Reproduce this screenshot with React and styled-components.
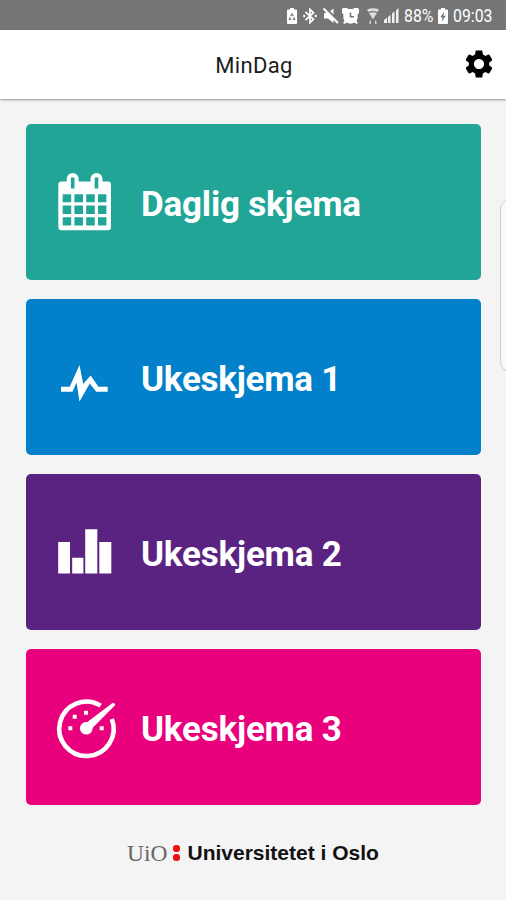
import React from 'react';
import styled, { createGlobalStyle } from 'styled-components';
import { MdSettings } from 'react-icons/md';

const forms = [
	{ title: 'Daglig skjema', color: '#20A596', icon: <CalendarIcon />, spacing: -0.2 },
	{ title: 'Ukeskjema 1', color: '#0380CA', icon: <PulseIcon />, spacing: -0.25 },
	{ title: 'Ukeskjema 2', color: '#5B2381', icon: <BarsIcon />, spacing: -0.2 },
	{ title: 'Ukeskjema 3', color: '#E8007D', icon: <GaugeIcon />, spacing: -0.2 },
];

const App = () => {
	return (
		<Screen>
			<GlobalStyle />
			<StatusBar />
			<Header>
				<HeaderTitle>MinDag</HeaderTitle>
				<SettingsButton aria-label='Innstillinger'>
					<MdSettings size={34} />
				</SettingsButton>
			</Header>
			<Main>
				{forms.map(({ title, color, icon, spacing }) => (
					<FormCard key={title} $color={color}>
						{icon}
						<CardTitle $spacing={spacing}>{title}</CardTitle>
					</FormCard>
				))}
			</Main>
			<Footer>
				<UioMark>UiO</UioMark>
				<Colon>
					<Dot />
					<Dot />
				</Colon>
				<UioName>Universitetet i Oslo</UioName>
			</Footer>
			<EdgeHandle />
		</Screen>
	)
}

export default App;

function StatusBar() {
	return (
		<Status>
			<StatusIcon width='10' height='16' viewBox='0 0 10 16' $gap={6}>
				<path fillRule='evenodd' d='M3 0h4v1.5h2a1 1 0 0 1 1 1V15a1 1 0 0 1-1 1H1a1 1 0 0 1-1-1V2.5a1 1 0 0 1 1-1h2zM5 5L3.2 7.6l1 .6L5 7l1 1.6 1-.6zM2.6 8.8L1.6 12h2.6v-1.2H3.2l.5-1.4zM7.4 8.8l-1 .6.5 1.4H5.6V12h2.8z' />
			</StatusIcon>
			<StatusIcon width='14' height='16' viewBox='0 0 14 16' $gap={6}>
				<path d='M2.500 4L10.500 11.300L7 14.700V1.300L10.500 4.700L2.500 12' fill='none' stroke='#fff' strokeWidth='1.700' />
				<circle cx='1.200' cy='8' r='1.200' />
				<circle cx='12.800' cy='8' r='1.200' />
			</StatusIcon>
			<StatusIcon width='16' height='16' viewBox='0 0 16 16' $gap={3}>
				<path d='M1 5h4l5.500-4.500v14.500L5 10.500H1z' />
				<path d='M1.500 0L16 14.500' stroke='#757575' strokeWidth='3.600' />
				<path d='M.500 .500L15 15' stroke='#fff' strokeWidth='2' />
			</StatusIcon>
			<StatusIcon width='17' height='16' viewBox='0 0 17 16' $gap={8}>
				<path d='M1 0h4l1 1h5l1-1h4l1 1v4l-1.400 1.500v4L14.500 13l1.500 2-1.500 1-2-1.400a8 8 0 0 1-8 0L2.500 16 1 15l1.500-2-1.100-2.500v-4L0 5V1z' />
				<path d='M8.500 4.500V8.800H12' fill='none' stroke='#757575' strokeWidth='1.500' />
			</StatusIcon>
			<StatusIcon width='12' height='16' viewBox='0 0 12 16' $gap={5}>
				<path d='M0 1.500Q6-1 12 1.500L10.500 4Q6 2 1.500 4zM2 5.200Q6 3.500 10 5.200L7.300 9v1.500H4.700V9z' opacity='.75' />
				<path d='M2.500 16v-2.500L4 12v4zM9.500 16v-2.500L8 12v4z' opacity='.7' />
			</StatusIcon>
			<StatusIcon width='15' height='15' viewBox='0 0 15 15' $gap={5}>
				<path d='M0 12l3-2.500V15H0zM4 9l2.500-2.200V15H4zM8 5.500l2.500-2V15H8zM12 2.500L14.500 0v15H12z' opacity='.9' />
			</StatusIcon>
			<StatusText $width={29}>88%</StatusText>
			<StatusIcon width='10' height='16' viewBox='0 0 10 16' $gap={5}>
				<path fillRule='evenodd' d='M3 0h4v1.500h2a1 1 0 0 1 1 1V15a1 1 0 0 1-1 1H1a1 1 0 0 1-1-1V2.500a1 1 0 0 1 1-1h2zM6 4L2.300 9.200h2.100L4 13.500l3.700-5.700H5.500z' />
			</StatusIcon>
			<StatusText $width={40}>09:03</StatusText>
		</Status>
	)
}

function CalendarIcon() {
	return (
		<CardIcon viewBox='0 0 60 60'>
			<path
				fillRule='evenodd'
				d='M5.300 9.500H10.700V7a6 6 0 0 1 12 0V9.500H34.500V7a6 6 0 0 1 12 0V9.500H52a3 3 0 0 1 3 3V55a3.300 3.300 0 0 1-3.300 3.300H5.600A3.300 3.300 0 0 1 2.300 55V12.500a3 3 0 0 1 3-3z
				M14.900 5.500V16.500h3.600V5.500zM38.700 5.500V16.500h3.600V5.500z
				M6.700 22.200h8.500v8h-8.500zM18.400 22.200h8.600v8h-8.600zM30.200 22.200h8.600v8h-8.600zM42 22.200h8.400v8H42z
				M6.700 33.500h8.500v8.600h-8.500zM18.400 33.500h8.600v8.600h-8.600zM30.200 33.500h8.600v8.600h-8.600zM42 33.500h8.400v8.600H42z
				M6.700 45.200h8.500v8.200h-8.500zM18.400 45.200h8.600v8.200h-8.600zM30.200 45.200h8.600v8.200h-8.600zM42 45.200h8.400v8.200H42z'
			/>
		</CardIcon>
	)
}

function PulseIcon() {
	return (
		<CardIcon viewBox='0 0 60 60'>
			<path d='M5 39.700H13.700L23.500 18L27.200 37L34.600 28.500L42.500 39.700H51.700V44.700H40.200L33.800 36.500L23.500 54.500L20.500 35.500L16.500 44.700H5z' />
		</CardIcon>
	)
}

function BarsIcon() {
	return (
		<CardIcon viewBox='0 0 60 60'>
			<path d='M2.200 20H14V51.600H2.200zM16.200 35.800H27.400V51.600H16.200zM29.200 7.200H41.300V51.600H29.200zM43.300 20H55.300V51.600H43.300z' />
		</CardIcon>
	)
}

function GaugeIcon() {
	return (
		<CardIcon viewBox='0 0 60 60'>
			<path d='M44.600 8.600A27.200 27.200 0 1 0 55.800 22' fill='none' stroke='#fff' strokeWidth='4.600' />
			<path d='M28 27.500L56.500 6Q59.500 5.500 58.800 8.500L33.500 34z' />
			<circle cx='30.300' cy='31.300' r='6.300' />
			<path d='M12.300 29.300h4v4h-4zM16.700 17.700h4v4h-4zM28 13.700h4v4h-4zM43.700 29.300h4v4h-4z' />
		</CardIcon>
	)
}

const GlobalStyle = createGlobalStyle`
* {
	box-sizing: border-box;
}

body {
	margin: 0;
	background: #F4F4F4;
	font-family: Roboto, sans-serif;
}
`;

const Screen = styled.div`
position: relative;
display: flex;
flex-direction: column;
height: 900px;
overflow: hidden;
background: #F4F4F4;
`;

const Status = styled.div`
display: flex;
align-items: center;
justify-content: flex-end;
height: 30px;
padding: 1px 13px 0 0;
background: #757575;
color: #FFFFFF;
`;

const StatusIcon = styled.svg`
flex: none;
margin-right: ${({ $gap }) => $gap}px;
fill: #FFFFFF;
`;

const StatusText = styled.span`
width: ${({ $width }) => $width}px;
margin-right: ${({ $width }) => $width < 30 ? 5 : 0}px;
font: 400 18px/28px Roboto, sans-serif;
white-space: nowrap;

/* Roboto is narrowed to the condensed look of the system clock */
transform: scaleX(0.88);
transform-origin: left;
`;

const Header = styled.header`
display: grid;
grid-template-columns: 1fr auto 1fr;
align-items: center;
flex: none;
height: 69px;
padding: 0 10px;
background: #FFFFFF;
box-shadow: 0 1px 2px rgba(0, 0, 0, 0.4);
`;

const HeaderTitle = styled.h1`
grid-column: 2;
margin: 2px 0 0 2px;
font: 400 22px/30px Roboto, sans-serif;
letter-spacing: 0.3px;
color: #1C1C1C;
`;

const SettingsButton = styled.button`
justify-self: end;
display: flex;
margin-top: -1px;
padding: 0;
border: 0;
background: none;
color: #000000;
`;

const Main = styled.main`
display: grid;
grid-auto-rows: 156px;
gap: 19px;
padding: 25px 25px 0 26px;
`;

const FormCard = styled.div`
display: flex;
align-items: center;
gap: 25px;
padding-left: 30px;
border-radius: 5px;
background: ${({ $color }) => $color};
`;

const CardIcon = styled.svg`
flex: none;
width: 60px;
height: 60px;
overflow: visible;
fill: #FFFFFF;
`;

const CardTitle = styled.h2`
margin: 6px 0 0;
font: 700 35px/42px Roboto, sans-serif;
letter-spacing: ${({ $spacing }) => $spacing}px;
color: #FFFFFF;
`;

const Footer = styled.footer`
display: flex;
align-items: center;
height: 40px;
margin: 28px 0 0 127px;
`;

const UioMark = styled.span`
font: 400 23.500px/30px 'Liberation Serif', serif;
color: #666666;
`;

const Colon = styled.span`
display: grid;
gap: 2px;
margin: 0 7px 0 6px;
`;

const Dot = styled.i`
width: 7px;
height: 7px;
border-radius: 3px;
background: #EE1111;
`;

const UioName = styled.span`
font: 700 21px/30px 'Liberation Sans', sans-serif;
color: #111111;
`;

/* edge panel handle of the phone, cut off by the right side */
const EdgeHandle = styled.div`
position: absolute;
top: 199px;
right: -14px;
width: 20px;
height: 173px;
border: 1px solid #CFCFCF;
border-radius: 10px;
background: #F9F9F9;
`;
